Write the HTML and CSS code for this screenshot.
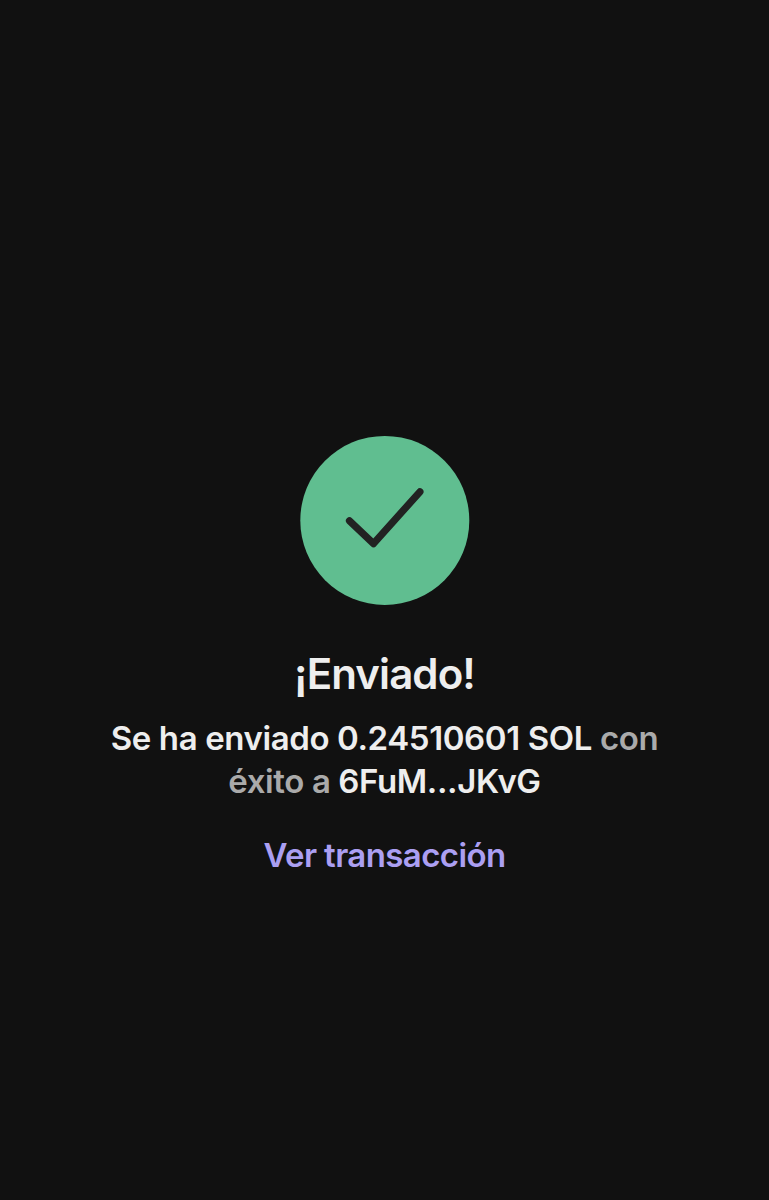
FILE: index.html
```
<!DOCTYPE html>
<html lang="es">
<head>
    <meta charset="UTF-8" />
    <meta name="viewport" content="width=device-width, initial-scale=1.0"/>
    <title>¡Enviado!</title>
    <link rel="stylesheet" href="styles.css">
</head>
<body>
    <main class="sent-screen">
        <svg class="success-icon" viewBox="0 0 170 170" aria-hidden="true">
            <circle cx="84.8" cy="85.4" r="84.5" fill="#60be90"/>
            <path d="M49.5 85.8 73.5 108.7 119.9 56.8" fill="none" stroke="#222" stroke-width="7.2" stroke-linecap="round" stroke-linejoin="round"/>
        </svg>

        <h1 class="sent-title">¡Enviado!</h1>

        <p class="sent-message">
            <strong>Se ha enviado 0.24510601 SOL</strong> con<br>
            éxito a <strong>6FuM...JKvG</strong>
        </p>

        <a class="transaction-link" href="#">Ver transacción</a>
    </main>
</body>
</html>
```
FILE: styles.css
```
* {
    margin: 0;
    padding: 0;
    box-sizing: border-box;
}

body {
    font-family: Inter, -apple-system, sans-serif;
    font-weight: 600;
    background: #111;
    color: #eee;
}

.sent-screen {
    min-height: 100vh;
    padding-top: 435px;
    display: flex;
    flex-direction: column;
    align-items: center;
    text-align: center;
}

.success-icon {
    width: 170px;
    height: 170px;
}

.sent-title {
    margin-top: 44px;
    font-size: 42px;
    font-weight: 600;
    line-height: 50px;
    letter-spacing: -0.9px;
}

.sent-message {
    margin-top: 18px;
    font-size: 33px;
    line-height: 43px;
    letter-spacing: -0.4px;
    color: #aaa;
}

.sent-message strong {
    font-weight: 600;
    color: #eee;
}

.transaction-link {
    margin-top: 31px;
    font-size: 33px;
    line-height: 43px;
    letter-spacing: -0.6px;
    color: #ab9ff2;
    text-decoration: none;
}
```
